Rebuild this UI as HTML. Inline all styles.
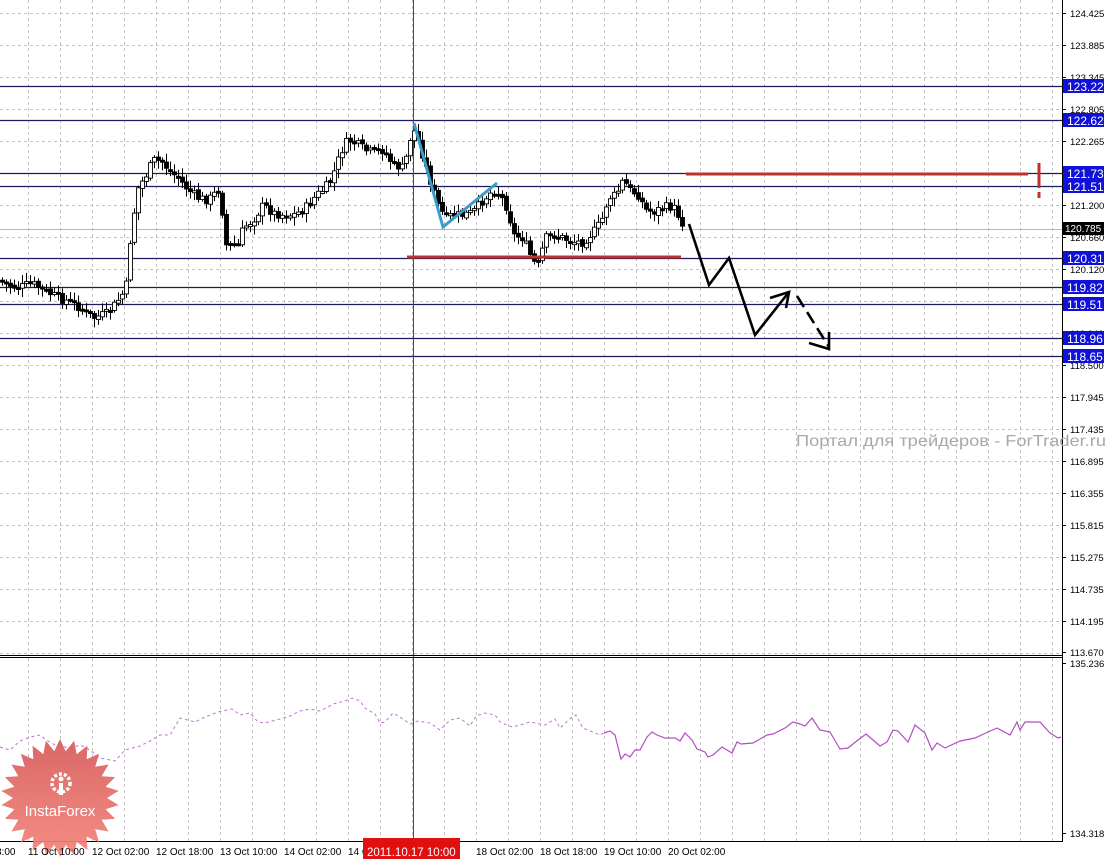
<!DOCTYPE html>
<html><head><meta charset="utf-8"><style>
html,body{margin:0;padding:0;background:#fff;}
svg{display:block;font-family:"Liberation Sans",Tahoma,sans-serif;}
</style></head><body>
<svg id="s" width="1114" height="859" viewBox="0 0 1114 859" xmlns="http://www.w3.org/2000/svg">
<rect width="1114" height="859" fill="#fff"/>
<g id="grid"></g>
<line x1="0" y1="229.5" x2="1062" y2="229.5" stroke="#b8b8b8" stroke-width="1"/>
<g stroke="#1a1a5e" stroke-width="1.2">
<line x1="0" y1="86.5" x2="1062" y2="86.5"/>
<line x1="0" y1="120.5" x2="1062" y2="120.5"/>
<line x1="0" y1="173.5" x2="1062" y2="173.5"/>
<line x1="0" y1="186.5" x2="1062" y2="186.5"/>
<line x1="0" y1="258.5" x2="1062" y2="258.5"/>
<line x1="0" y1="287.5" x2="1062" y2="287.5"/>
<line x1="0" y1="304.5" x2="1062" y2="304.5"/>
<line x1="0" y1="338.5" x2="1062" y2="338.5"/>
<line x1="0" y1="356.5" x2="1062" y2="356.5"/>
</g>
<line x1="413.5" y1="0" x2="413.5" y2="841" stroke="#b02020" stroke-width="1"/>
<g id="candles"></g>
<line x1="686" y1="174" x2="1028" y2="174" stroke="#c0302e" stroke-width="3"/>
<line x1="407" y1="257" x2="681" y2="257" stroke="#c0302e" stroke-width="3"/>
<line x1="1039" y1="163" x2="1039" y2="188" stroke="#c0302e" stroke-width="3"/>
<line x1="1039" y1="192" x2="1039" y2="198" stroke="#c0302e" stroke-width="3"/>
<polyline points="414,123 443,227 497,183" fill="none" stroke="#3a9ccc" stroke-width="3"/>
<g stroke="#000" stroke-width="2.6" fill="none">
<polyline points="689,224 709,285 729,258 755,335 789,292"/>
<polyline points="770,298 789,292 786,308"/>
<line x1="797" y1="296" x2="829" y2="347" stroke-dasharray="13,6"/>
<polyline points="809,343 829,349 829,332"/>
</g>
<polyline fill="none" stroke="#c070d0" stroke-width="1" stroke-dasharray="3,3" points="0,747 10,750 20,741 30,737 40,735 48,741 55,745 70,748 80,745 90,750 100,758 115,761 125,750 140,746 150,741 160,735 170,735 180,718 195,722 205,717 218,712 232,709 240,715 250,713 258,722 265,723 280,719 290,716 300,711 310,709 320,711 328,707 333,704 345,701 352,698 360,701 365,708 375,714 380,723 385,722 393,713 400,717 410,724 418,721 430,723 440,730 450,720 460,718 470,726 476,716 485,713 495,715 500,722 512,727 520,725 530,722 545,725 555,719 560,728 572,717 576,715 583,728 600,735 604,733"/>
<polyline fill="none" stroke="#b050c0" stroke-width="1.2" points="604,733 610,731 615,735 621,759 625,754 630,757 635,750 640,750 647,737 652,732 657,735 665,738 675,738 680,741 685,733 692,740 697,749 705,752 708,757 713,755 722,747 732,753 737,742 741,744 753,743 767,735 773,734 785,728 793,722 800,724 805,726 812,718 820,730 830,732 840,749 848,748 858,740 866,734 873,740 880,746 887,742 893,730 898,731 908,742 915,725 925,733 932,750 937,743 945,748 960,741 975,738 988,732 997,728 1010,735 1017,722 1020,730 1025,722 1040,722 1050,733 1058,738 1061,737"/>
<line x1="0" y1="655.5" x2="1062" y2="655.5" stroke="#000"/>
<line x1="0" y1="657.5" x2="1062" y2="657.5" stroke="#000"/>
<line x1="1062.5" y1="0" x2="1062.5" y2="842" stroke="#000"/>
<line x1="0" y1="841.5" x2="1063" y2="841.5" stroke="#000"/>
<g id="axis" font-size="9.5" fill="#000"></g>
<text x="796" y="446" font-size="16" fill="#a8a8a8" textLength="310" lengthAdjust="spacingAndGlyphs">Портал для трейдеров - ForTrader.ru</text>
<defs><linearGradient id="lg" x1="0" y1="0" x2="0" y2="1"><stop offset="0" stop-color="#d65a5a"/><stop offset="1" stop-color="#f4847a"/></linearGradient></defs>
<polygon id="star" fill="url(#lg)" opacity="0.92"/>
<g fill="#fff">
<circle cx="61" cy="783" r="9" fill="none" stroke="#fff" stroke-width="3.5" stroke-dasharray="3,2"/>
<rect x="59" y="783" width="4" height="12"/>
<circle cx="61" cy="779" r="2.5"/>
</g>
<text x="60" y="816" font-size="15" fill="#fff" text-anchor="middle">InstaForex</text>
<g font-size="10" fill="#000">
<text x="-4" y="855">8:00</text>
<text x="28" y="855">11 Oct 10:00</text>
<text x="92" y="855">12 Oct 02:00</text>
<text x="156" y="855">12 Oct 18:00</text>
<text x="220" y="855">13 Oct 10:00</text>
<text x="284" y="855">14 Oct 02:00</text>
<text x="348" y="855">14 Oct</text>
<text x="476" y="855">18 Oct 02:00</text>
<text x="540" y="855">18 Oct 18:00</text>
<text x="604" y="855">19 Oct 10:00</text>
<text x="668" y="855">20 Oct 02:00</text>
</g>
<rect x="363" y="838" width="97" height="21" fill="#e01010"/>
<text x="367" y="856" font-size="11.5" fill="#fff">2011.10.17 10:00</text>
</svg>
<script>
(function(){
var NS="http://www.w3.org/2000/svg";
function el(p,t,a,txt){var e=document.createElementNS(NS,t);for(var k in a)e.setAttribute(k,a[k]);if(txt!=null)e.textContent=txt;p.appendChild(e);return e;}
var g=document.getElementById('grid');
for(var x=28;x<1062;x+=32){el(g,'line',{x1:x+.5,y1:0,x2:x+.5,y2:655,stroke:'#c4c4c4','stroke-dasharray':'3,3'});el(g,'line',{x1:x+.5,y1:658,x2:x+.5,y2:841,stroke:'#c4c4c4','stroke-dasharray':'3,3'});}
for(var y=13;y<655;y+=32){el(g,'line',{x1:0,y1:y+.5,x2:1062,y2:y+.5,stroke:'#c4c4c4','stroke-dasharray':'3,3'});}
var ax=document.getElementById('axis');
var labs=[[13,"124.425"],[45,"123.885"],[77,"123.345"],[109,"122.805"],[141,"122.265"],[205,"121.200"],[237,"120.660"],[269,"120.120"],[301,"119.580"],[333,"119.040"],[365,"118.500"],[397,"117.945"],[429,"117.435"],[461,"116.895"],[493,"116.355"],[525,"115.815"],[557,"115.275"],[589,"114.735"],[621,"114.195"],[652,"113.670"],[663,"135.236"],[833,"134.318"]];
labs.forEach(function(l){el(ax,'line',{x1:1062,y1:l[0]+.5,x2:1066,y2:l[0]+.5,stroke:'#000'});el(ax,'text',{x:1070,y:l[0]+4},l[1]);});
var boxes=[[86,"123.22"],[120,"122.62"],[173,"121.73"],[186,"121.51"],[258,"120.31"],[287,"119.82"],[304,"119.51"],[338,"118.96"],[356,"118.65"]];
boxes.forEach(function(b){el(ax,'rect',{x:1063,y:b[0]-7,width:41,height:14,fill:'#1010d8'});el(ax,'text',{x:1067,y:b[0]+5,'font-size':'12',fill:'#fff'},b[1]);});
el(ax,'rect',{x:1063,y:222,width:41,height:13,fill:'#000'});el(ax,'text',{x:1065,y:232,fill:'#fff','font-size':'10'},"120.785");
var pts=[[0,280],[10,285],[20,288],[33,283],[45,290],[60,298],[75,303],[95,318],[110,313],[120,300],[125,293],[128,285],[133,230],[140,188],[148,175],[155,160],[165,162],[170,170],[180,178],[190,190],[200,198],[210,200],[220,190],[223,195],[226,245],[232,245],[240,245],[245,228],[255,220],[265,205],[275,213],[285,215],[295,215],[305,210],[312,203],[318,195],[325,190],[333,180],[340,160],[345,147],[350,140],[360,145],[370,152],[385,150],[395,165],[405,168],[410,150],[414,127],[420,140],[430,175],[440,205],[447,218],[455,215],[465,215],[475,212],[485,200],[495,190],[502,195],[510,210],[515,235],[525,238],[535,262],[540,265],[547,238],[555,235],[565,238],[575,242],[585,242],[595,232],[603,222],[610,198],[618,195],[625,180],[632,190],[640,195],[648,210],[655,212],[665,207],[675,207],[680,215],[685,225]];
function py(x){for(var i=0;i<pts.length-1;i++){if(x>=pts[i][0]&&x<=pts[i+1][0]){var t=(x-pts[i][0])/(pts[i+1][0]-pts[i][0]);return pts[i][1]+t*(pts[i+1][1]-pts[i][1]);}}return pts[pts.length-1][1];}
var c=document.getElementById('candles');var seed=7;function rnd(){seed=(seed*9301+49297)%233280;return seed/233280;}
var prev=py(0);
for(var x=2;x<=684;x+=4){var cl=py(x+2)+(rnd()-.5)*9;var op=prev+(rnd()-.5)*3;var hi=Math.min(op,cl)-2-rnd()*7;var lo=Math.max(op,cl)+2+rnd()*7;
el(c,'line',{x1:x+.5,y1:hi,x2:x+.5,y2:lo,stroke:'#000'});
var top=Math.min(op,cl),h=Math.max(2,Math.abs(op-cl));
el(c,'rect',{x:x-1.5,y:top,width:4,height:h,fill:(cl<op?'#fff':'#000'),stroke:'#000','stroke-width':'0.9'});
prev=cl;}
var s='',n=26,cx=60,cy=798;for(var i=0;i<n*2;i++){var r=i%2?47:59;var a=Math.PI*i/n-Math.PI/2;s+=(cx+r*Math.cos(a)).toFixed(1)+','+(cy+r*Math.sin(a)).toFixed(1)+' ';}
document.getElementById('star').setAttribute('points',s);
})();
</script>
</body></html>
